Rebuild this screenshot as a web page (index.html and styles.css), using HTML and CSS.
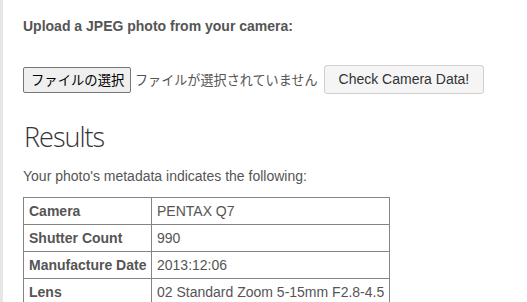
FILE: index.html
```html
<!DOCTYPE html>
<html lang="ja">
<head>
<meta charset="utf-8">
<title>Shutter Count</title>
<link rel="stylesheet" href="styles.css">
</head>
<body>
<div class="page">
  <form class="upload">
    <label class="upload-label">Upload a JPEG photo from your camera:</label>
    <div class="upload-row">
      <span class="file-btn">ファイルの選択</span>
      <span class="file-status">ファイルが選択されていません</span>
      <button type="button" class="check-btn">Check Camera Data!</button>
    </div>
  </form>
  <h2 class="results-title">Results</h2>
  <p class="results-intro">Your photo's metadata indicates the following:</p>
  <table class="meta">
    <tr><th>Camera</th><td>PENTAX Q7</td></tr>
    <tr><th>Shutter Count</th><td>990</td></tr>
    <tr><th>Manufacture Date</th><td>2013:12:06</td></tr>
    <tr><th>Lens</th><td>02 Standard Zoom 5-15mm F2.8-4.5</td></tr>
  </table>
</div>
</body>
</html>
```
FILE: styles.css
```css
html, body {
  margin: 0;
  padding: 0;
  background: #fff;
}
body {
  font-family: "Liberation Sans", Arial, sans-serif;
  font-size: 14px;
  line-height: 20px;
  color: #555;
}
.page {
  min-height: 302px;
  box-sizing: border-box;
  border-left: 3px solid #e6e6e6;
  padding: 16px 20px 0 20px;
}
.upload {
  margin: 0;
}
.upload-label {
  display: block;
  font-weight: bold;
  line-height: 20px;
}
.upload-row {
  display: flex;
  align-items: center;
  margin-top: 29px;
  height: 29px;
}
.file-btn {
  font-family: "Noto Sans CJK JP", sans-serif;
  font-size: 13.33px;
  line-height: 20px;
  color: #000;
  background: #efefef;
  border: 1px solid #767676;
  border-radius: 2px;
  padding: 2px 7px 2px 7px;
  box-sizing: border-box;
  height: 26px;
  width: 108px;
  text-align: center;
  white-space: nowrap;
}
.file-status {
  font-family: "Noto Sans CJK JP", sans-serif;
  font-size: 13.1px;
  color: #555;
  margin-left: 4px;
  white-space: nowrap;
}
.check-btn {
  font-family: "Liberation Sans", Arial, sans-serif;
  font-size: 14px;
  line-height: 27px;
  color: #333;
  background: #f5f5f5;
  border: 1px solid #cfcfcf;
  border-radius: 3px;
  padding: 0 14px;
  margin-left: 6px;
  height: 29px;
  white-space: nowrap;
}
.results-title {
  font-family: "Open Sans", sans-serif;
  font-weight: 300;
  font-size: 27px;
  line-height: 30px;
  letter-spacing: -1px;
  color: #333;
  margin: 28px 0 0 1px;
}
.results-intro {
  margin: 14px 0 0 0;
}
.meta {
  border-collapse: collapse;
  margin-top: 11px;
  table-layout: fixed;
  width: 367px;
}
.meta th,
.meta td {
  border: 1px solid #858585;
  padding: 3px 5px;
  line-height: 20px;
  text-align: left;
  white-space: nowrap;
}
.meta th {
  width: 117px;
  font-weight: bold;
}
```
